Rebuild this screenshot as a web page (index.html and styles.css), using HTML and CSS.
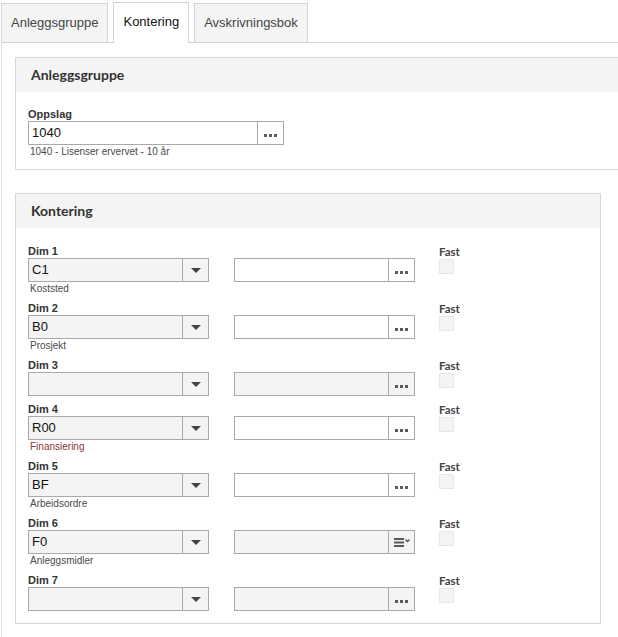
FILE: index.html
```html
<!DOCTYPE html>
<html lang="no">

<head>
  <meta charset="UTF-8" />
  <meta name="viewport" content="width=device-width, initial-scale=1.0" />
  <title>Anlegg</title>
  <link rel="stylesheet" href="styles.css">
</head>

<body>
  <div class="tabs">
    <div class="tab">Anleggsgruppe</div>
    <div class="tab active">Kontering</div>
    <div class="tab">Avskrivningsbok</div>
  </div>
  <div class="panel">
    <div class="box box-wide">
      <div class="box-head">Anleggsgruppe</div>
      <div class="box-body">
        <div class="lbl">Oppslag</div>
        <div class="lookup lookup-big">
          <div class="val">1040</div>
          <div class="btn"><svg width="13" height="3" viewBox="0 0 13 3"><rect x="0" y="0" width="3" height="3" /><rect x="5" y="0" width="3" height="3" /><rect x="10" y="0" width="3" height="3" /></svg></div>
        </div>
        <div class="help">1040 - Lisenser ervervet - 10 år</div>
      </div>
    </div>

    <div class="box box-kont">
      <div class="box-head">Kontering</div>
      <div class="box-body">
        <div class="dim">
          <div class="dim-main">
            <div class="lbl">Dim 1</div>
            <div class="pair">
              <div class="select"><div class="val">C1</div><div class="arrow"><i></i></div></div>
              <div class="lookup"><div class="val"></div><div class="btn"><svg width="13" height="3" viewBox="0 0 13 3"><rect width="3" height="3" /><rect x="5" width="3" height="3" /><rect x="10" width="3" height="3" /></svg></div></div>
            </div>
            <div class="help">Koststed</div>
          </div>
          <div class="fast"><div class="lbl-fast">Fast</div><span class="check"></span></div>
        </div>

        <div class="dim">
          <div class="dim-main">
            <div class="lbl">Dim 2</div>
            <div class="pair">
              <div class="select"><div class="val">B0</div><div class="arrow"><i></i></div></div>
              <div class="lookup"><div class="val"></div><div class="btn"><svg width="13" height="3" viewBox="0 0 13 3"><rect width="3" height="3" /><rect x="5" width="3" height="3" /><rect x="10" width="3" height="3" /></svg></div></div>
            </div>
            <div class="help">Prosjekt</div>
          </div>
          <div class="fast"><div class="lbl-fast">Fast</div><span class="check"></span></div>
        </div>

        <div class="dim">
          <div class="dim-main">
            <div class="lbl">Dim 3</div>
            <div class="pair">
              <div class="select"><div class="val"></div><div class="arrow"><i></i></div></div>
              <div class="lookup off"><div class="val"></div><div class="btn"><svg width="13" height="3" viewBox="0 0 13 3"><rect width="3" height="3" /><rect x="5" width="3" height="3" /><rect x="10" width="3" height="3" /></svg></div></div>
            </div>
          </div>
          <div class="fast"><div class="lbl-fast">Fast</div><span class="check"></span></div>
        </div>

        <div class="dim">
          <div class="dim-main">
            <div class="lbl">Dim 4</div>
            <div class="pair">
              <div class="select"><div class="val">R00</div><div class="arrow"><i></i></div></div>
              <div class="lookup"><div class="val"></div><div class="btn"><svg width="13" height="3" viewBox="0 0 13 3"><rect width="3" height="3" /><rect x="5" width="3" height="3" /><rect x="10" width="3" height="3" /></svg></div></div>
            </div>
            <div class="help help-red">Finansiering</div>
          </div>
          <div class="fast"><div class="lbl-fast">Fast</div><span class="check"></span></div>
        </div>

        <div class="dim">
          <div class="dim-main">
            <div class="lbl">Dim 5</div>
            <div class="pair">
              <div class="select"><div class="val">BF</div><div class="arrow"><i></i></div></div>
              <div class="lookup"><div class="val"></div><div class="btn"><svg width="13" height="3" viewBox="0 0 13 3"><rect width="3" height="3" /><rect x="5" width="3" height="3" /><rect x="10" width="3" height="3" /></svg></div></div>
            </div>
            <div class="help">Arbeidsordre</div>
          </div>
          <div class="fast"><div class="lbl-fast">Fast</div><span class="check"></span></div>
        </div>

        <div class="dim">
          <div class="dim-main">
            <div class="lbl">Dim 6</div>
            <div class="pair">
              <div class="select"><div class="val">F0</div><div class="arrow"><i></i></div></div>
              <div class="lookup off"><div class="val"></div><div class="btn btn-list"><svg width="17" height="9" viewBox="0 0 17 9"><rect x="0" y="0" width="10" height="2" /><rect x="0" y="3.5" width="10" height="2" /><rect x="0" y="7" width="10" height="2" /><path d="M11.5 1.5 L13.5 3.5 L15.5 1.5" fill="none" stroke="#555" stroke-width="1.3" /></svg></div></div>
            </div>
            <div class="help">Anleggsmidler</div>
          </div>
          <div class="fast"><div class="lbl-fast">Fast</div><span class="check"></span></div>
        </div>

        <div class="dim dim-last">
          <div class="dim-main">
            <div class="lbl">Dim 7</div>
            <div class="pair">
              <div class="select"><div class="val"></div><div class="arrow"><i></i></div></div>
              <div class="lookup off"><div class="val"></div><div class="btn"><svg width="13" height="3" viewBox="0 0 13 3"><rect width="3" height="3" /><rect x="5" width="3" height="3" /><rect x="10" width="3" height="3" /></svg></div></div>
            </div>
          </div>
          <div class="fast"><div class="lbl-fast">Fast</div><span class="check"></span></div>
        </div>
      </div>
    </div>
  </div>
</body>

</html>
```

FILE: styles.css
```css
body {
  margin: 0;
  font-family: "Liberation Sans", Arial, sans-serif;
  color: #333;
  background: #fff;
  overflow: hidden;
}

/* faner */
.tabs {
  display: flex;
  align-items: flex-end;
  gap: 5px;
  padding: 2px 0 0 1px;
  height: 40px;
}

.tab {
  box-sizing: border-box;
  height: 39px;
  line-height: 37px;
  padding: 0 9px;
  font-size: 13px;
  color: #444;
  background: #f3f4f3;
  border: 1px solid #d3d3d3;
  border-bottom: none;
}

.tab.active {
  height: 41px;
  margin-bottom: -1px;
  background: #fff;
  color: #111;
  position: relative;
  z-index: 1;
}

.panel {
  margin-left: 1px;
  border-top: 1px solid #d3d3d3;
  border-left: 1px solid #e0e0e0;
  padding: 14px 0 20px 13px;
}

/* bokser */
.box {
  border: 1px solid #d5d8d8;
  background: #fff;
}

.box-wide {
  margin-right: -10px;
}

.box-kont {
  width: 584px;
  margin-top: 23px;
}

.box-head {
  height: 34px;
  line-height: 33px;
  padding-left: 15px;
  background: #f3f4f3;
  font-family: Lato, "Liberation Sans", sans-serif;
  font-weight: bold;
  font-size: 14px;
  color: #333;
}

.box-body {
  padding: 16px 12px 11px 12px;
}

.box-kont .box-body {
  padding-top: 17px;
  padding-bottom: 12px;
}

.lbl {
  font-size: 11px;
  font-weight: bold;
  line-height: 13px;
  height: 13px;
  color: #333;
}

.help {
  font-size: 10px;
  line-height: 14px;
  height: 13px;
  padding-left: 2px;
  color: #4a4a4a;
}

.help-red {
  color: #8a3838;
}

/* felter */
.lookup,
.select {
  box-sizing: border-box;
  display: flex;
  width: 181px;
  height: 24px;
  border: 1px solid #a9a9a9;
  background: #fff;
}

.select {
  background: #f3f4f3;
}

.lookup.off {
  background: #f3f4f3;
}

.lookup-big {
  width: 256px;
}

.val {
  flex: 1;
  font-size: 13px;
  line-height: 22px;
  padding-left: 3px;
  color: #111;
}

.btn,
.arrow {
  width: 25px;
  border-left: 1px solid #a9a9a9;
  display: flex;
  justify-content: center;
  align-items: center;
}

.btn svg {
  fill: #5a5a5a;
  margin-top: 5px;
}

.btn-list svg {
  margin-top: 0;
  margin-left: 2px;
}

.arrow i {
  width: 0;
  height: 0;
  border-left: 5px solid transparent;
  border-right: 5px solid transparent;
  border-top: 5px solid #444;
  margin-top: 1px;
}

.dim {
  display: flex;
  gap: 24px;
  margin-bottom: 7px;
}

.dim-last {
  margin-bottom: 0;
}

.pair {
  display: flex;
  gap: 25px;
}

.lbl-fast {
  font-family: Lato, "Liberation Sans", sans-serif;
  font-weight: bold;
  font-size: 11.5px;
  line-height: 13px;
  height: 13px;
  color: #444;
}

.check {
  display: block;
  box-sizing: border-box;
  width: 15px;
  height: 15px;
  margin-top: 1px;
  background: #f3f4f3;
  border: 1px solid #e6e8e8;
}
```
